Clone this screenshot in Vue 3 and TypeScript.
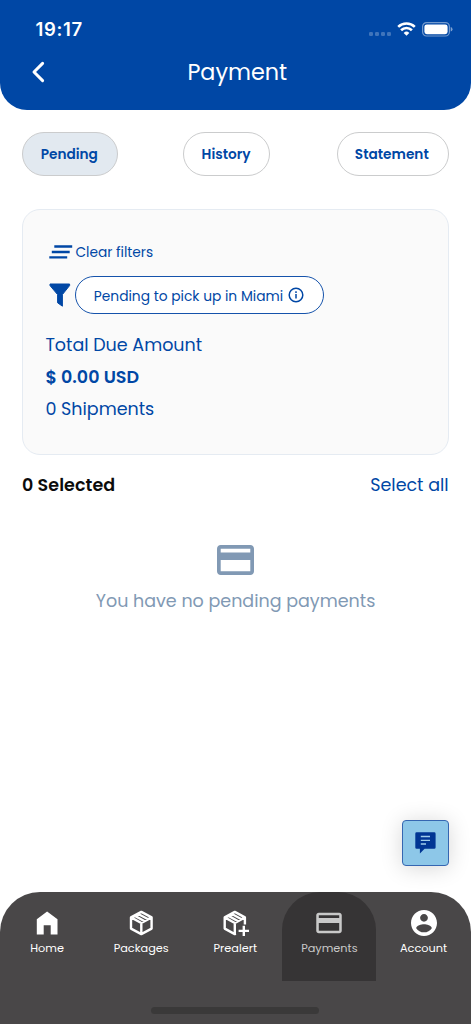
<script setup lang="ts">
import { ref } from 'vue'

type TabId = 'pending' | 'history' | 'statement'
type NavId = 'home' | 'packages' | 'prealert' | 'payments' | 'account'

const tabs: { id: TabId; label: string }[] = [
  { id: 'pending', label: 'Pending' },
  { id: 'history', label: 'History' },
  { id: 'statement', label: 'Statement' },
]

const navItems: { id: NavId; label: string }[] = [
  { id: 'home', label: 'Home' },
  { id: 'packages', label: 'Packages' },
  { id: 'prealert', label: 'Prealert' },
  { id: 'payments', label: 'Payments' },
  { id: 'account', label: 'Account' },
]

const activeTab = ref<TabId>('pending')
const activeNav = ref<NavId>('payments')
</script>

<template>
  <div class="screen">
    <header class="top">
      <div class="status">
        <span class="clock">19:17</span>
        <div class="signals">
          <svg class="dots" width="22" height="4" viewBox="0 0 22 4">
            <rect v-for="i in 4" :key="i" :x="(i - 1) * 6" y="0" width="4" height="4" rx="1.3" />
          </svg>
          <svg class="wifi" width="19" height="14" viewBox="0 0 19 14">
            <path d="M1.2 4.9A11.9 11.9 0 0 1 17.8 4.9" />
            <path d="M4.1 8.2A7.7 7.7 0 0 1 14.9 8.2" />
            <path class="solid" d="M9.5 13.8L6.7 10.9A4 4 0 0 1 12.3 10.9Z" />
          </svg>
          <svg class="battery" width="31" height="15" viewBox="0 0 31 15">
            <rect class="shell" x="0.6" y="0.6" width="26.8" height="13.4" rx="4" />
            <rect class="charge" x="2.4" y="2.4" width="23.2" height="9.8" rx="2.4" />
            <path class="tip" d="M28.7 5Q30.5 5.6 30.5 7.3T28.7 9.6Z" />
          </svg>
        </div>
      </div>
      <div class="titlebar">
        <svg class="back" width="14" height="22" viewBox="0 0 14 22">
          <path d="M11.6 2.4L3 11L11.6 19.6" />
        </svg>
        <h1>Payment</h1>
      </div>
    </header>

    <main>
      <div class="tabs">
        <button
          v-for="tab in tabs"
          :key="tab.id"
          :class="['tab', tab.id, { active: tab.id === activeTab }]"
          @click="activeTab = tab.id"
        >
          {{ tab.label }}
        </button>
      </div>

      <section class="card">
        <div class="clear">
          <svg width="24" height="14" viewBox="0 0 24 14">
            <path d="M5.3 1.5H23.2M2.8 7H20.7M0.3 12.4H18.2" />
          </svg>
          <span>Clear filters</span>
        </div>
        <div class="filter">
          <svg class="funnel" width="22" height="24" viewBox="0 0 22 24">
            <path d="M1 1H20.6V2.6L13.4 11.6V23.2L8.6 19.8V11.6L1 2.6Z" />
          </svg>
          <div class="chip">
            <span>Pending to pick up in Miami</span>
            <svg class="info" width="16" height="16" viewBox="0 0 16 16">
              <circle cx="8" cy="8" r="6.8" />
              <path d="M8 7.1V11.6M8 4.3V5.9" />
            </svg>
          </div>
        </div>
        <p class="due">Total Due Amount</p>
        <p class="amount">$ 0.00 USD</p>
        <p class="shipments">0 Shipments</p>
      </section>

      <div class="selection">
        <strong>0 Selected</strong>
        <a>Select all</a>
      </div>

      <div class="empty">
        <svg width="37" height="30" viewBox="2 4 20 16" preserveAspectRatio="none">
          <path d="M20 4H4c-1.11 0-1.99.89-1.99 2L2 18c0 1.11.89 2 2 2h16c1.11 0 2-.89 2-2V6c0-1.11-.89-2-2-2zm0 14H4v-6h16v6zm0-10H4V6h16v2z" />
        </svg>
        <p>You have no pending payments</p>
      </div>
    </main>

    <button class="chat" aria-label="Chat">
      <svg width="21" height="22" viewBox="0 0 21 22">
        <path class="bubble" d="M1.6 0.3H19.2Q20.6 0.3 20.6 1.7V15.4Q20.6 16.8 19.2 16.8H9.6L4.9 21.4V16.8H1.6Q0.3 16.8 0.3 15.4V1.7Q0.3 0.3 1.6 0.3Z" />
        <path class="lines" d="M5.8 4.5H15M5.8 8.3H15M5.8 12H11" />
      </svg>
    </button>

    <nav class="bottom">
      <div class="items">
        <a
          v-for="item in navItems"
          :key="item.id"
          :class="['item', { active: item.id === activeNav }]"
          @click="activeNav = item.id"
        >
          <svg v-if="item.id === 'home'" width="28" height="28" viewBox="0 0 28 28">
            <path class="fill" d="M14.1 2.6L24.5 10.2V25.4H17.7V16.2H10.7V25.4H3.8V10.2Z" />
          </svg>
          <svg v-else-if="item.id === 'packages'" width="28" height="28" viewBox="0 0 28 28">
            <path class="line" d="M14.3 2.9L24.6 8.4V19.6L14.3 25.1L4 19.6V8.4ZM4 8.4L14.3 14L24.6 8.4M14.3 14V25M7.4 6.6L17.7 12.2M10.8 4.8L21.1 10.3" />
          </svg>
          <svg v-else-if="item.id === 'prealert'" width="28" height="28" viewBox="0 0 28 28">
            <path class="line" d="M14.8 24.6L13.8 25.1L3.7 19.6V8.4L13.8 2.9L23.9 8.4V15.4M3.7 8.4L13.8 14L23.9 8.4M13.8 14V25M7.1 6.6L17.2 12.2M10.4 4.8L20.5 10.3M22.8 16.7V27.1M17.6 21.9H28" />
          </svg>
          <svg v-else-if="item.id === 'payments'" width="28" height="28" viewBox="0 0 28 28">
            <path class="fill" transform="translate(-1.3 -1.3) scale(1.275)" d="M20 4H4c-1.11 0-1.99.89-1.99 2L2 18c0 1.11.89 2 2 2h16c1.11 0 2-.89 2-2V6c0-1.11-.89-2-2-2zm0 14H4v-6h16v6zm0-10H4V6h16v2z" />
          </svg>
          <svg v-else width="28" height="28" viewBox="0 0 28 28">
            <path class="fill" transform="translate(-1.6 -1.6) scale(1.3)" d="M12 2C6.48 2 2 6.48 2 12s4.48 10 10 10 10-4.48 10-10S17.52 2 12 2zm0 3c1.66 0 3 1.34 3 3s-1.34 3-3 3-3-1.34-3-3 1.34-3 3-3zm0 14.2c-2.5 0-4.71-1.28-6-3.22.03-1.99 4-3.08 6-3.08 1.99 0 5.97 1.09 6 3.08-1.29 1.94-3.5 3.22-6 3.22z" />
          </svg>
          <span>{{ item.label }}</span>
        </a>
      </div>
      <div class="indicator"></div>
    </nav>
  </div>
</template>

<style scoped>
.screen {
  position: relative;
  display: flex;
  flex-direction: column;
  width: 470.6px;
  height: 1024px;
  overflow: hidden;
  background: #fff;
  color: #0047a5;
  font-family: Poppins, Inter, sans-serif;
}
svg { display: block; flex: none; }
p, h1 { margin: 0; }
button { padding: 0; font: inherit; color: inherit; cursor: pointer; }

.top {
  box-sizing: border-box;
  height: 110.4px;
  padding-top: 17px;
  border-radius: 0 0 27px 27px;
  background: #0047a5;
  color: #fff;
}
.status {
  display: flex;
  justify-content: space-between;
  height: 25px;
  padding: 0 18px 0 35.4px;
}
.clock { font: 600 18.5px/25px Inter, sans-serif; letter-spacing: 0.7px; }
.signals { display: flex; align-items: flex-start; padding-top: 5px; }
.dots { margin: 10px 6px 0 0; fill: rgba(255, 255, 255, 0.25); }
.wifi { margin-right: 6px; fill: none; stroke: #fff; stroke-width: 2.6; }
.wifi .solid { fill: #fff; stroke: none; }
.battery .shell { fill: none; stroke: rgba(255, 255, 255, 0.45); stroke-width: 1.2; }
.battery .charge { fill: #fff; }
.battery .tip { fill: rgba(255, 255, 255, 0.5); }
.titlebar {
  display: grid;
  grid-template-columns: 45px 1fr 45px;
  align-items: center;
  height: 60px;
}
.back {
  justify-self: end;
  fill: none;
  stroke: #fff;
  stroke-width: 3;
  stroke-linecap: round;
  stroke-linejoin: round;
}
h1 {
  padding: 2px 0 0 4px;
  text-align: center;
  font-size: 22.3px;
  line-height: 30px;
  font-weight: 400;
}

main { padding: 21.4px 22px 0 22.4px; }
.tabs { display: flex; justify-content: space-between; }
.tab {
  box-sizing: border-box;
  height: 44px;
  padding: 2px 1.6px 0 0;
  border: 1.4px solid #cbcccd;
  border-radius: 22px;
  background: #fff;
  font-size: 13.7px;
  font-weight: 600;
}
.tab.active { background: #e2e9f0; }
.tab.pending { width: 95.4px; }
.tab.history { width: 87px; margin-left: 16.4px; }
.tab.statement { width: 112px; margin-left: 17px; }

.card {
  box-sizing: border-box;
  height: 246px;
  margin-top: 33.2px;
  padding: 33px 22px 0 22px;
  border: 1.5px solid #e5ebf2;
  border-radius: 18px;
  background: #fafafa;
}
.clear {
  display: flex;
  align-items: center;
  gap: 2px;
  height: 20px;
  padding-left: 4px;
  font-size: 13.75px;
}
.clear svg { margin-top: -1px; fill: none; stroke: #0047a5; stroke-width: 2.3; }
.filter { display: flex; align-items: center; gap: 4px; margin-top: 13px; padding-left: 3.8px; }
.funnel { fill: #0047a5; stroke: #0047a5; stroke-width: 1; stroke-linejoin: round; }
.chip {
  box-sizing: border-box;
  display: flex;
  align-items: center;
  gap: 5.4px;
  width: 249px;
  height: 38px;
  padding-left: 17.6px;
  border: 1.5px solid #1553ab;
  border-radius: 19px;
  background: #fff;
  font-size: 13.8px;
  white-space: nowrap;
}
.chip span { padding-top: 4px; }
.info { fill: none; stroke: #0047a5; stroke-width: 1.5; }
.due, .amount, .shipments { font-size: 17.5px; line-height: 32px; }
.due { margin-top: 15px; }
.amount { font-weight: 600; }

.selection {
  display: flex;
  justify-content: space-between;
  margin-top: 18px;
  font-size: 17.5px;
  line-height: 24px;
}
.selection strong { margin-left: -0.5px; color: #0b0b0b; font-weight: 600; letter-spacing: 0.08px; }

.empty {
  display: flex;
  flex-direction: column;
  align-items: center;
  margin-top: 48px;
  color: #8199b4;
}
.empty svg { fill: #8199b4; }
.empty p { margin-top: 14px; font-size: 17.5px; line-height: 24px; }

.chat {
  position: absolute;
  right: 21.8px;
  bottom: 158px;
  box-sizing: border-box;
  display: grid;
  place-items: center;
  width: 46.4px;
  height: 46.4px;
  border: 1.4px solid #3566b1;
  border-radius: 4px;
  background: #8dc7e8;
  box-shadow: 0 2px 22px rgba(0, 0, 0, 0.16);
}
.chat .bubble { fill: #003594; }
.chat .lines { fill: none; stroke: #9fcbea; stroke-width: 1.3; }

.bottom {
  position: relative;
  display: flex;
  flex-direction: column;
  justify-content: space-between;
  align-items: center;
  height: 131.6px;
  margin-top: auto;
  border-radius: 40px 40px 0 0;
  background: #494748;
  color: #fff;
}
.items { display: grid; grid-template-columns: repeat(5, 1fr); width: 100%; }
.item {
  display: flex;
  flex-direction: column;
  align-items: center;
  gap: 3.4px;
  box-sizing: border-box;
  height: 88.4px;
  padding-top: 16.6px;
  font-size: 11.3px;
  line-height: 16px;
  font-weight: 400;
}
.item.active { border-radius: 38px 38px 0 0; background: #363435; color: #c9c9c9; }
.item svg { overflow: visible; }
.item .fill { fill: currentColor; }
.item .line { fill: none; stroke: currentColor; stroke-width: 2.4; stroke-linejoin: round; }
.indicator { width: 168px; height: 6.6px; margin-bottom: 10.4px; border-radius: 4px; background: #3a3939; }
</style>

<style>
html, body { background: #fff; }
</style>
